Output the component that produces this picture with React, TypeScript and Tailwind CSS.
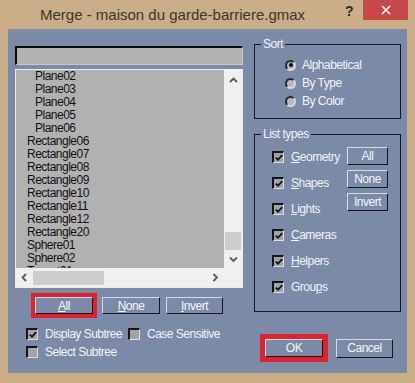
import React from "react";

const items: [string, boolean][] = [
  ["Plane02", true],
  ["Plane03", true],
  ["Plane04", true],
  ["Plane05", true],
  ["Plane06", true],
  ["Rectangle06", false],
  ["Rectangle07", false],
  ["Rectangle08", false],
  ["Rectangle09", false],
  ["Rectangle10", false],
  ["Rectangle11", false],
  ["Rectangle12", false],
  ["Rectangle20", false],
  ["Sphere01", false],
  ["Sphere02", false],
  ["Teapot01", false],
];

function U({ text, i }: { text: string; i?: number }) {
  if (i === undefined) return <>{text}</>;
  return (
    <>
      {text.slice(0, i)}
      <span className="underline underline-offset-[1px] decoration-1">{text[i]}</span>
      {text.slice(i + 1)}
    </>
  );
}

function Btn({ label, u, cls }: { label: string; u?: number; cls: string }) {
  return (
    <div
      className={
        "flex items-center justify-center border border-t-[#d4dbe8] border-l-[#d4dbe8] border-b-[#14161c] border-r-[#14161c] bg-[#7b8aa7] text-[#f4f6fa] leading-none " +
        cls
      }
    >
      <span>
        <U text={label} i={u} />
      </span>
    </div>
  );
}

function Check({ on }: { on: boolean }) {
  return (
    <div className="w-[12px] h-[12px] shrink-0 flex items-center justify-center border-t-2 border-l-2 border-b border-r border-t-[#161616] border-l-[#161616] border-b-[#dcdcdc] border-r-[#dcdcdc] bg-[#a4a4a4]">
      {on && (
        <svg width="8" height="8" viewBox="0 0 8 8">
          <polyline points="0.8,3.6 3,5.8 7.2,1.2" fill="none" stroke="#111" strokeWidth="1.8" />
        </svg>
      )}
    </div>
  );
}

function Radio({ on }: { on: boolean }) {
  return (
    <div className="w-[11px] h-[11px] shrink-0 rounded-full flex items-center justify-center border-2 border-t-[#2a2a2a] border-l-[#2a2a2a] border-b-[#d8d8d8] border-r-[#d8d8d8] bg-[#b9b9b9]">
      {on && <div className="w-[4px] h-[4px] rounded-full bg-[#0a0a0a]" />}
    </div>
  );
}

function Chevron({ dir }: { dir: "up" | "down" | "left" | "right" }) {
  const pts = {
    up: "1,5 4.5,1.5 8,5",
    down: "1,1.5 4.5,5 8,1.5",
    left: "5,1 1.5,4.5 5,8",
    right: "1.5,1 5,4.5 1.5,8",
  }[dir];
  const vert = dir === "up" || dir === "down";
  return (
    <svg width={vert ? 9 : 7} height={vert ? 7 : 9} viewBox={vert ? "0 0 9 7" : "0 0 7 9"}>
      <polyline points={pts} fill="none" stroke="#5a5a5a" strokeWidth="1.8" />
    </svg>
  );
}

export default function App() {
  return (
    <div className="w-[415px] h-[383px] bg-[#c9ae87] flex flex-col font-['Liberation_Sans',Arial,sans-serif] text-[12px] tracking-[-0.5px]">
      <div className="h-[29px] flex items-start shrink-0">
        <div className="w-[340px] pl-[40px] pt-[5px] text-[15px] leading-[20px] tracking-normal text-[#3a3631]">
          Merge - maison du garde-barriere.gmax
        </div>
        <div className="w-[23px] pl-[5px] pt-[3px] text-[14px] leading-[16px] font-bold text-[#2a2a2a]">?</div>
        <div className="w-[45px] h-[20px] bg-[#c8474b] flex items-center justify-center">
          <svg width="10" height="10" viewBox="0 0 10 10">
            <path d="M1 1 L9 9 M9 1 L1 9" stroke="#fff" strokeWidth="1.6" />
          </svg>
        </div>
      </div>

      <div className="mx-[8px] h-[344px] bg-[#7b8aa7] flex pl-[7px]">
        <div className="w-[228px] mt-[17px] flex flex-col">
          <div className="h-[19px] bg-[#b2b2b2] border-t-2 border-l-2 border-b border-r border-t-[#0a0a0a] border-l-[#0a0a0a] border-b-[#c4c8d0] border-r-[#c4c8d0]" />

          <div className="mt-[4px] h-[219px] border border-[#ececec] flex flex-col">
            <div className="flex h-[198px]">
              <div className="w-[208px] bg-[#b1b1b1] overflow-hidden text-[#111]">
                {items.map(([name, child]) => (
                  <div
                    key={name}
                    className={"h-[13px] leading-[13px] whitespace-nowrap " + (child ? "pl-[19px]" : "pl-[11px]")}
                  >
                    {name}
                  </div>
                ))}
              </div>
              <div className="w-[18px] bg-[#f0f0f0] flex flex-col">
                <div className="h-[20px] flex items-center justify-center">
                  <Chevron dir="up" />
                </div>
                <div className="flex-1" />
                <div className="h-[18px] mx-[1px] bg-[#cdcdcd]" />
                <div className="h-[18px] flex items-center justify-center">
                  <Chevron dir="down" />
                </div>
              </div>
            </div>
            <div className="flex flex-1 bg-[#f0f0f0]">
              <div className="w-[17px] flex items-center justify-center">
                <Chevron dir="left" />
              </div>
              <div className="w-[71px] h-[14px] mt-[3px] bg-[#cdcdcd]" />
              <div className="flex-1" />
              <div className="w-[17px] flex items-center justify-center">
                <Chevron dir="right" />
              </div>
              <div className="w-[18px]" />
            </div>
          </div>

          <div className="mt-[5px] flex items-center">
            <div className="ml-[16px] border-[4px] border-[#e2222b]">
              <Btn label="All" u={0} cls="w-[58px] h-[17px]" />
            </div>
            <Btn label="None" u={0} cls="ml-[5px] w-[58px] h-[17px]" />
            <Btn label="Invert" u={0} cls="ml-[6px] w-[57px] h-[17px]" />
          </div>

          <div className="mt-[10px] ml-[11px] flex items-center h-[12px] text-[#f2f4f8]">
            <div className="w-[102px] flex items-center gap-[7px]">
              <Check on />
              <span>Display Subtree</span>
            </div>
            <div className="flex items-center gap-[7px]">
              <Check on={false} />
              <span>Case Sensitive</span>
            </div>
          </div>
          <div className="mt-[6px] ml-[11px] flex items-center gap-[7px] h-[12px] text-[#f2f4f8]">
            <Check on={false} />
            <span>Select Subtree</span>
          </div>
        </div>

        <div className="ml-[11px] w-[147px] mt-[8px] flex flex-col text-[#f2f4f8]">
          <fieldset className="h-[82px] border border-[#141820]">
            <legend className="ml-[6px] px-[2px] leading-[14px]">Sort</legend>
            <div className="pt-[5px]">
              {["Alphabetical", "By Type", "By Color"].map((s, i) => (
                <div key={s} className="h-[18px] pl-[30px] flex items-center gap-[6px]">
                  <Radio on={i === 0} />
                  <span>{s}</span>
                </div>
              ))}
            </div>
          </fieldset>

          <fieldset className="mt-[8px] h-[185px] border border-[#141820]">
            <legend className="ml-[6px] px-[2px] leading-[14px]">List types</legend>
            <div className="flex">
              <div className="flex-1 pt-[3px]">
                {(
                  [
                    ["Geometry", 0],
                    ["Shapes", 0],
                    ["Lights", 0],
                    ["Cameras", 0],
                    ["Helpers", 0],
                    ["Groups", 4],
                  ] as [string, number][]
                ).map(([s, u]) => (
                  <div key={s} className="h-[26px] pl-[17px] flex items-center gap-[7px]">
                    <Check on />
                    <span>
                      <U text={s} i={u} />
                    </span>
                  </div>
                ))}
              </div>
              <div className="w-[41px] mt-[6px] mr-[12px] flex flex-col gap-[5px]">
                <Btn label="All" cls="h-[18px]" />
                <Btn label="None" cls="h-[18px]" />
                <Btn label="Invert" cls="h-[18px]" />
              </div>
            </div>
          </fieldset>

          <div className="mt-[22px] flex items-center">
            <div className="ml-[6px] border-[5px] border-[#e2222b]">
              <Btn label="OK" cls="w-[58px] h-[18px]" />
            </div>
            <Btn label="Cancel" cls="ml-[8px] w-[57px] h-[19px]" />
          </div>
        </div>
      </div>
      <div className="flex-1" />
    </div>
  );
}
